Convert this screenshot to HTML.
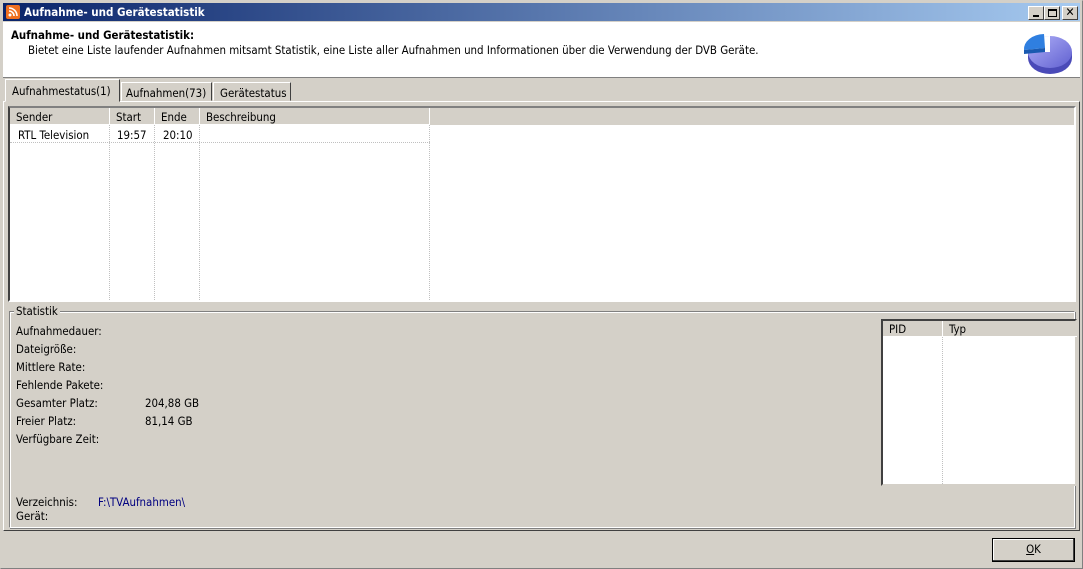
<!DOCTYPE html><html><head><style>
*{margin:0;padding:0;box-sizing:border-box}
body{width:1083px;height:569px;background:#d4d0c8;font-family:"DejaVu Sans Condensed","Liberation Sans",sans-serif;font-size:11.4px;color:#000;position:relative;overflow:hidden}
.a{position:absolute}
.t{white-space:nowrap}
</style></head><body>
<div class="a" style="left:0;top:0;width:1083px;height:569px;border:1px solid #808080;border-top-color:#d4d0c8;border-left-color:#d4d0c8"></div>
<div class="a" style="left:3px;top:3px;width:1077px;height:18px;background:linear-gradient(90deg,#0a246a,#a6caf0)"></div>
<div class="a" style="left:6px;top:5px;width:14px;height:14px;background:#f07020;border-radius:2px"><svg width="14" height="14"><circle cx="4" cy="10" r="1.5" fill="#fff"/><path d="M3 6a5 5 0 0 1 5 5M3 3a8 8 0 0 1 8 8" stroke="#fff" stroke-width="1.6" fill="none"/></svg></div>
<div class="a t" style="left:24px;top:5px;color:#fff;font-weight:bold;font-size:11.5px">Aufnahme- und Gerätestatistik</div>
<div class="a" style="left:1028px;top:6px;width:16px;height:14px;background:#d4d0c8;border:1px solid;border-color:#fff #404040 #404040 #fff"><div class="a" style="left:4px;top:8px;width:6px;height:2px;background:#000"></div></div>
<div class="a" style="left:1044px;top:6px;width:16px;height:14px;background:#d4d0c8;border:1px solid;border-color:#fff #404040 #404040 #fff"><div class="a" style="left:3px;top:2px;width:9px;height:8px;border:1px solid #000;border-top-width:2px"></div></div>
<div class="a" style="left:1062px;top:6px;width:16px;height:14px;background:#d4d0c8;border:1px solid;border-color:#fff #404040 #404040 #fff;font-size:12px;font-weight:bold;text-align:center;line-height:11px">✕</div>
<div class="a" style="left:3px;top:22px;width:1077px;height:56px;background:#fff;border-bottom:1px solid #808080"></div>
<div class="a t" style="left:11px;top:28px;font-weight:bold">Aufnahme- und Gerätestatistik:</div>
<div class="a t" style="left:28px;top:43px">Bietet eine Liste laufender Aufnahmen mitsamt Statistik, eine Liste aller Aufnahmen und Informationen über die Verwendung der DVB Geräte.</div>
<svg class="a" style="left:1022px;top:30px" width="52" height="46">
<defs><linearGradient id="g" x1="0" y1="0" x2="1" y2="1"><stop offset="0" stop-color="#b0b0f8"/><stop offset="1" stop-color="#6060d0"/></linearGradient></defs>
<path d="M6 22v6a22 16 0 0 0 44 0v-6z" fill="#4a4ab8"/>
<ellipse cx="28" cy="22" rx="22" ry="16" fill="url(#g)"/>
<path d="M28 22L6 22a22 16 0 0 1 22-16z" fill="#fff"/>
<path d="M23 18L2 20a21 15 0 0 1 20-16z" fill="#2f7fe0"/>
<path d="M2 20v4l21-2v-4z" fill="#1a5ab0"/>
</svg>
<div class="a" style="left:3px;top:101px;width:1077px;height:430px;border:1px solid;border-color:#fff #404040 #404040 #fff"></div>
<div class="a t" style="left:5px;top:79px;width:115px;height:23px;background:#d4d0c8;border:1px solid;border-color:#fff #404040 transparent #fff;padding:4px 0 0 6px">Aufnahmestatus(1)</div>
<div class="a t" style="left:121px;top:82px;width:91px;height:19px;border:1px solid;border-color:#fff #404040 transparent #fff;padding:3px 0 0 4px">Aufnahmen(73)</div>
<div class="a t" style="left:213px;top:82px;width:78px;height:19px;border:1px solid;border-color:#fff #404040 transparent #fff;padding:3px 0 0 6px">Gerätestatus</div>
<div class="a" style="left:8px;top:106px;width:1068px;height:196px;background:#fff;border:2px solid;border-color:#808080 #fff #fff #404040"></div>
<div class="a" style="left:10px;top:108px;width:1064px;height:17px;background:#d4d0c8"></div>
<div class="a" style="left:10px;top:108px;width:420px;height:17px;border-bottom:1px solid #fff"></div>
<div class="a t" style="left:16px;top:110px">Sender</div><div class="a" style="left:109px;top:108px;width:1px;height:17px;background:#fff"></div>
<div class="a t" style="left:116px;top:110px">Start</div><div class="a" style="left:154px;top:108px;width:1px;height:17px;background:#fff"></div>
<div class="a t" style="left:161px;top:110px">Ende</div><div class="a" style="left:199px;top:108px;width:1px;height:17px;background:#fff"></div>
<div class="a t" style="left:206px;top:110px">Beschreibung</div><div class="a" style="left:429px;top:108px;width:1px;height:17px;background:#fff"></div>
<div class="a t" style="left:18px;top:128px">RTL Television</div><div class="a t" style="left:117px;top:128px">19:57</div><div class="a t" style="left:163px;top:128px">20:10</div>
<div class="a" style="left:10px;top:142px;width:420px;border-top:1px dotted #c0c0c0"></div>
<div class="a" style="left:109px;top:125px;height:175px;border-left:1px dotted #c0c0c0"></div>
<div class="a" style="left:154px;top:125px;height:175px;border-left:1px dotted #c0c0c0"></div>
<div class="a" style="left:199px;top:125px;height:175px;border-left:1px dotted #c0c0c0"></div>
<div class="a" style="left:429px;top:125px;height:175px;border-left:1px dotted #c0c0c0"></div>
<div class="a" style="left:9px;top:311px;width:1066px;height:217px;border:1px solid;border-color:#808080 #fff #fff #808080;box-shadow:inset 1px 1px #fff,1px 1px #808080"></div>
<div class="a t" style="left:14px;top:304px;background:#d4d0c8;padding:0 2px">Statistik</div>
<div class="a t" style="left:16px;top:324px">Aufnahmedauer:</div>
<div class="a t" style="left:16px;top:342px">Dateigröße:</div>
<div class="a t" style="left:16px;top:360px">Mittlere Rate:</div>
<div class="a t" style="left:16px;top:378px">Fehlende Pakete:</div>
<div class="a t" style="left:16px;top:396px">Gesamter Platz:</div><div class="a t" style="left:145px;top:396px">204,88 GB</div>
<div class="a t" style="left:16px;top:414px">Freier Platz:</div><div class="a t" style="left:145px;top:414px">81,14 GB</div>
<div class="a t" style="left:16px;top:432px">Verfügbare Zeit:</div>
<div class="a t" style="left:16px;top:495px">Verzeichnis:</div><div class="a t" style="left:98px;top:495px;color:#000080">F:\TVAufnahmen\</div>
<div class="a t" style="left:16px;top:509px">Gerät:</div>
<div class="a" style="left:881px;top:319px;width:196px;height:167px;background:#fff;border:2px solid;border-color:#404040 #d4d0c8 #d4d0c8 #404040"></div>
<div class="a" style="left:883px;top:321px;width:194px;height:16px;background:#d4d0c8;border-bottom:1px solid #fff"></div>
<div class="a" style="left:942px;top:321px;width:1px;height:16px;background:#fff"></div>
<div class="a t" style="left:889px;top:322px">PID</div><div class="a t" style="left:949px;top:322px">Typ</div>
<div class="a" style="left:942px;top:337px;height:147px;border-left:1px dotted #c0c0c0"></div>
<div class="a t" style="left:992px;top:538px;width:83px;height:24px;border:1px solid #000;box-shadow:inset -1px -1px #404040,inset 1px 1px #fff;text-align:center;line-height:21px"><u>O</u>K</div>
</body></html>
